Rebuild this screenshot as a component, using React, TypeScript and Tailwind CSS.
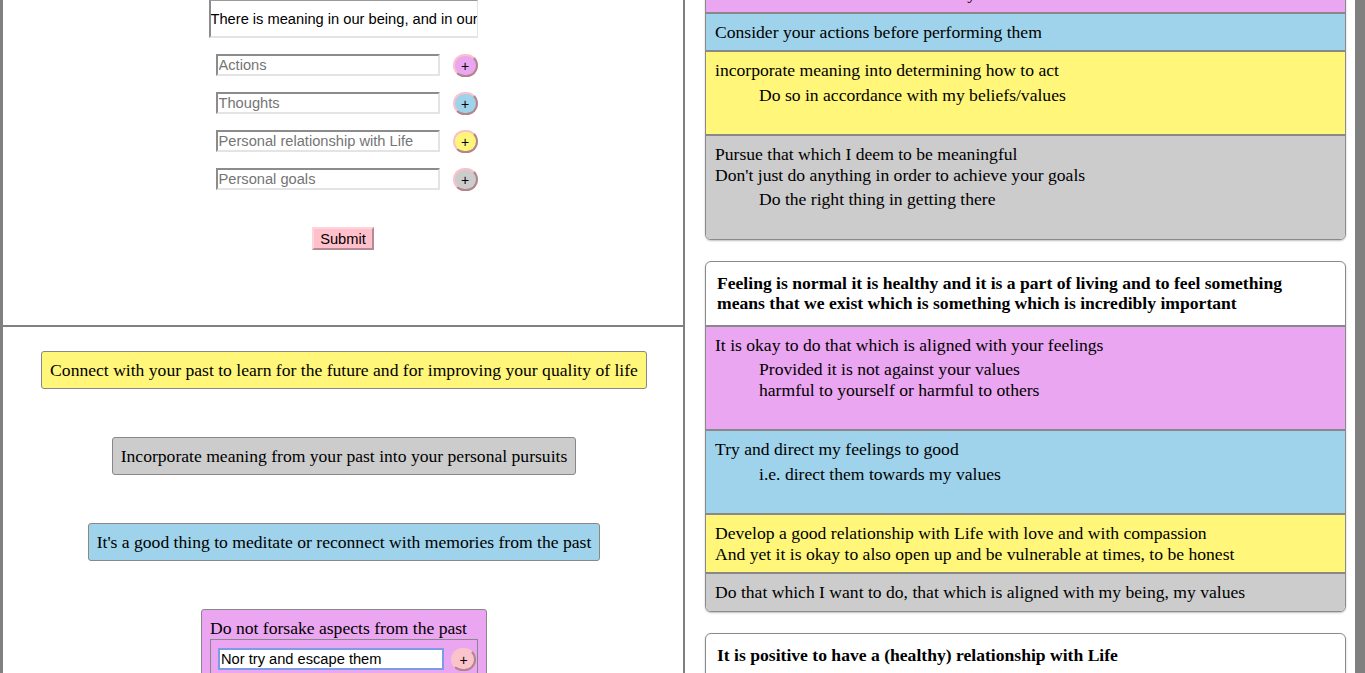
import React from "react";

type Row = { bg: string; lines: string[]; sub?: string[] };

const SERIF = "font-['Liberation_Serif',serif] text-[17.6px] leading-[20.5px] text-black";
const BOX = "font-['Liberation_Serif',serif] text-[17.6px] leading-[20px] text-black";
const SANS = "font-['Liberation_Sans',Arial,sans-serif]";

function Card({ title, rows, className }: { title?: string; rows: Row[]; className?: string }) {
  return (
    <div
      className={`overflow-hidden rounded-[6px] border border-[#8a8a8a] bg-white shadow-[0_1px_2px_rgba(0,0,0,0.25)] ${className ?? ""}`}
    >
      {title && (
        <div className={`${SERIF} border-b-2 border-[#888888] py-[11px] pl-[11px] pr-[24px] font-bold`}>{title}</div>
      )}
      {rows.map((r, i) => (
        <div
          key={i}
          className={`${SERIF} ${r.bg} px-[9px] py-[8px] ${i < rows.length - 1 ? "border-b-2 border-[#888888]" : ""}`}
        >
          {r.lines.map((l, j) => (
            <div key={j}>{l}</div>
          ))}
          {r.sub && (
            <div className="mb-[21px] ml-[44px] mt-[4px]">
              {r.sub.map((l, j) => (
                <div key={j}>{l}</div>
              ))}
            </div>
          )}
        </div>
      ))}
    </div>
  );
}

function Plus({ bg }: { bg: string }) {
  return (
    <div
      className={`flex h-[23px] w-[25px] shrink-0 items-center justify-center rounded-full border-2 border-t-[#f8c3cc] border-l-[#f8c3cc] border-r-[#b3848c] border-b-[#b3848c] ${bg} ${SANS} text-[14px] leading-none text-black`}
    >
      +
    </div>
  );
}

function Field({ placeholder }: { placeholder: string }) {
  return (
    <input
      readOnly
      placeholder={placeholder}
      className={`h-[22px] w-[224px] border-2 border-t-[#8c8c8c] border-l-[#8c8c8c] border-r-[#e4e4e4] border-b-[#e4e4e4] bg-white px-[1px] ${SANS} text-[14.67px] text-black outline-none placeholder:text-[#757575]`}
    />
  );
}

export default function App() {
  const card1: Row[] = [
    { bg: "bg-[#eaa6f0]", lines: ["Be mindful of what I do and how my actions affect others"] },
    { bg: "bg-[#9ed3eb]", lines: ["Consider your actions before performing them"] },
    {
      bg: "bg-[#fff67a]",
      lines: ["incorporate meaning into determining how to act"],
      sub: ["Do so in accordance with my beliefs/values"],
    },
    {
      bg: "bg-[#cccccc]",
      lines: ["Pursue that which I deem to be meaningful", "Don't just do anything in order to achieve your goals"],
      sub: ["Do the right thing in getting there"],
    },
  ];
  const card2: Row[] = [
    {
      bg: "bg-[#eaa6f0]",
      lines: ["It is okay to do that which is aligned with your feelings"],
      sub: ["Provided it is not against your values", "harmful to yourself or harmful to others"],
    },
    {
      bg: "bg-[#9ed3eb]",
      lines: ["Try and direct my feelings to good"],
      sub: ["i.e. direct them towards my values"],
    },
    {
      bg: "bg-[#fff67a]",
      lines: [
        "Develop a good relationship with Life with love and with compassion",
        "And yet it is okay to also open up and be vulnerable at times, to be honest",
      ],
    },
    { bg: "bg-[#cccccc]", lines: ["Do that which I want to do, that which is aligned with my being, my values"] },
  ];
  const card3: Row[] = [{ bg: "bg-[#eaa6f0]", lines: ["Be open with Life"] }];

  return (
    <div className="flex h-[673px] w-[1365px] overflow-hidden bg-white">
      {/* Left pane */}
      <div className="flex w-[685px] shrink-0 flex-col border-l-[3px] border-r-2 border-[#808080]">
        <div className="flex h-[325px] shrink-0 flex-col items-center">
          <div className="w-[269px]">
            <input
              readOnly
              value="There is meaning in our being, and in our actions and in our thoughts"
              className={`block h-[38px] w-[269px] border-2 border-t-[1px] border-r-[1px] border-t-[#9a9a9a] border-l-[#8c8c8c] border-r-[#e4e4e4] border-b-[#e4e4e4] bg-white px-0 ${SANS} text-[14.67px] text-black outline-none`}
            />
            <div className="mt-[16px] flex flex-col gap-[15px]">
              <div className="flex items-start justify-between pl-[7px]">
                <Field placeholder="Actions" />
                <Plus bg="bg-[#eaa6f0]" />
              </div>
              <div className="flex items-start justify-between pl-[7px]">
                <Field placeholder="Thoughts" />
                <Plus bg="bg-[#9ed3eb]" />
              </div>
              <div className="flex items-start justify-between pl-[7px]">
                <Field placeholder="Personal relationship with Life" />
                <Plus bg="bg-[#fff67a]" />
              </div>
              <div className="flex items-start justify-between pl-[7px]">
                <Field placeholder="Personal goals" />
                <Plus bg="bg-[#cccccc]" />
              </div>
            </div>
          </div>
          <button
            className={`mt-[36px] flex h-[23px] w-[62px] items-center justify-center border-2 border-t-[#ffd3da] border-l-[#ffd3da] border-r-[#b48b94] border-b-[#b48b94] bg-[#ffc0cb] ${SANS} text-[14.67px] text-black`}
          >
            Submit
          </button>
        </div>
        <div className="h-[2px] shrink-0 bg-[#808080]" />
        <div className="flex flex-col items-center gap-[48px] pt-[24px]">
          <div className={`${BOX} ml-[2px] rounded-[3px] border border-[#888888] bg-[#fff67a] px-[8px] py-[8px]`}>
            Connect with your past to learn for the future and for improving your quality of life
          </div>
          <div className={`${BOX} ml-[2px] rounded-[3px] border border-[#888888] bg-[#cccccc] px-[8px] py-[8px]`}>
            Incorporate meaning from your past into your personal pursuits
          </div>
          <div className={`${BOX} ml-[2px] rounded-[3px] border border-[#888888] bg-[#9ed3eb] px-[8px] py-[8px]`}>
            It's a good thing to meditate or reconnect with memories from the past
          </div>
          <div className={`${BOX} ml-[2px] rounded-[3px] border border-[#888888] bg-[#eaa6f0] px-[8px] pt-[8px] pb-[8px]`}>
            <div>Do not forsake aspects from the past</div>
            <div className="mt-[1px] flex w-[268px] items-start gap-[7px] border border-[#888888] pl-[7px] pt-[8px] pb-[8px]">
              <input
                readOnly
                value="Nor try and escape them"
                className={`h-[22px] w-[226px] border-2 border-[#7c9ce8] bg-white px-[1px] ${SANS} text-[14.67px] text-black outline-none`}
              />
              <Plus bg="bg-[#fbc4cc]" />
            </div>
          </div>
        </div>
      </div>

      {/* Right pane */}
      <div className="flex-1 pl-[20px] pr-[9px]">
        <Card rows={card1} className="mt-[-26px]" />
        <Card
          className="mt-[21px]"
          title="Feeling is normal it is healthy and it is a part of living and to feel something means that we exist which is something which is incredibly important"
          rows={card2}
        />
        <Card className="mt-[21px]" title="It is positive to have a (healthy) relationship with Life" rows={card3} />
      </div>
      <div className="w-[10px] shrink-0 bg-[#808080]" />
    </div>
  );
}
